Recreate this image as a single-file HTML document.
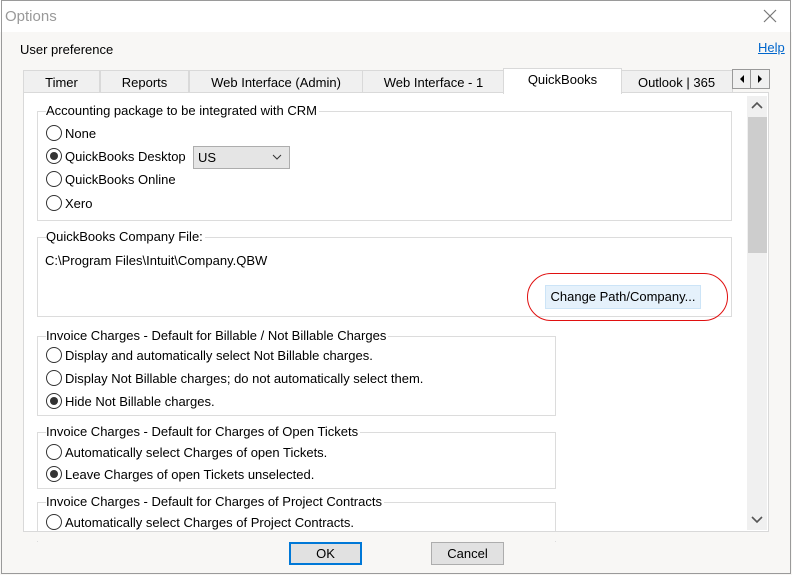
<!DOCTYPE html>
<html><head><style>
*{box-sizing:border-box;margin:0;padding:0}
body{width:792px;height:575px;position:relative;overflow:hidden;background:#fff;font-family:"Liberation Sans",sans-serif;font-size:13px;color:#000}
.a{position:absolute;white-space:nowrap}
.win{position:absolute;left:0;top:0;width:792px;height:575px;background:#f8f7f5}
.frame{position:absolute;left:1px;top:0;width:790px;height:574px;border:1px solid #9a9a9a}
.title{position:absolute;left:0;top:0;width:792px;height:32px;background:#fff}
.tab{position:absolute;top:70px;height:23px;background:#f0f0f0;border:1px solid #d9d9d9;border-bottom:none;text-align:center;line-height:23px;font-size:13px}
.panel{position:absolute;left:23px;top:92px;width:746px;height:442px;background:#fff;border:1px solid #d9d9d9}
.gb{position:absolute;border:1px solid #dcdcdc}
.gl{position:absolute;top:-9px;left:8px;background:#fff;padding-right:2px;font-size:13px}
.r{position:absolute;width:16px;height:16px;border:1px solid #333;border-radius:50%;background:#fff}
.r.on::after{content:"";position:absolute;left:3px;top:3px;width:8px;height:8px;border-radius:50%;background:#333}
.btn{position:absolute;height:23px;background:#e1e1e1;border:1px solid #adadad;text-align:center;line-height:21px;font-size:13px}
</style></head><body>
<div class="win">
<div class="title"></div>
<div class="a" style="left:5px;top:8px;font-size:15px;color:#999">Options</div>
<svg class="a" style="left:763px;top:9px" width="14" height="14"><path d="M1 1L13 13M13 1L1 13" stroke="#777" stroke-width="1.2"/></svg>
<div class="a" style="left:20px;top:42px">User preference</div>
<div class="a" style="left:758px;top:40px;color:#0066cc;text-decoration:underline">Help</div>

<div class="tab" style="left:23px;width:77px">Timer</div>
<div class="tab" style="left:100px;width:89px">Reports</div>
<div class="tab" style="left:189px;width:174px">Web Interface (Admin)</div>
<div class="tab" style="left:362px;width:143px">Web Interface - 1</div>
<div class="tab" style="left:620px;width:113px">Outlook | 365</div>
<div class="panel"></div>
<div class="tab" style="left:503px;top:68px;height:26px;width:119px;background:#fff;line-height:22px">QuickBooks</div>
<div class="a" style="left:732px;top:69px;width:38px;height:20px;border:1px solid #999;background:#f0f0f0"></div>
<div class="a" style="left:750px;top:70px;width:1px;height:18px;background:#999"></div>
<svg class="a" style="left:737px;top:74px" width="10" height="10"><path d="M7 1L3 5L7 9Z" fill="#000"/></svg>
<svg class="a" style="left:755px;top:74px" width="10" height="10"><path d="M3 1L7 5L3 9Z" fill="#000"/></svg>

<div class="a" style="left:747px;top:96px;width:20px;height:434px;background:#f0f0f0"></div>
<div class="a" style="left:748px;top:117px;width:19px;height:136px;background:#cdcdcd"></div>
<svg class="a" style="left:751px;top:101px" width="12" height="8"><path d="M1 7L6 2L11 7" stroke="#555" stroke-width="1.6" fill="none"/></svg>
<svg class="a" style="left:751px;top:516px" width="12" height="8"><path d="M1 1L6 6L11 1" stroke="#555" stroke-width="1.6" fill="none"/></svg>

<div class="gb" style="left:37px;top:111px;width:695px;height:110px"><span class="gl">Accounting package to be integrated with CRM</span></div>
<div class="r" style="left:46px;top:125px"></div><div class="a" style="left:65px;top:126px">None</div>
<div class="r on" style="left:46px;top:148px"></div><div class="a" style="left:65px;top:149px">QuickBooks Desktop</div>
<div class="a" style="left:193px;top:146px;width:97px;height:23px;background:#e5e5e5;border:1px solid #adadad;padding-left:4px;line-height:21px">US</div>
<svg class="a" style="left:272px;top:154px" width="10" height="7"><path d="M1 1L5 5L9 1" stroke="#333" fill="none"/></svg>
<div class="r" style="left:46px;top:171px"></div><div class="a" style="left:65px;top:172px">QuickBooks Online</div>
<div class="r" style="left:46px;top:195px"></div><div class="a" style="left:65px;top:196px">Xero</div>

<div class="gb" style="left:37px;top:237px;width:695px;height:80px"><span class="gl">QuickBooks Company File:</span></div>
<div class="a" style="left:45px;top:253px">C:\Program Files\Intuit\Company.QBW</div>
<div class="a" style="left:545px;top:285px;width:156px;height:24px;background:#e5f1fb;border:1px solid #cce4f7;line-height:22px;text-align:center">Change Path/Company...</div>
<div class="a" style="left:527px;top:273px;width:201px;height:48px;border:1.5px solid #e01010;border-radius:24px"></div>

<div class="gb" style="left:37px;top:336px;width:519px;height:80px"><span class="gl">Invoice Charges - Default for Billable / Not Billable Charges</span></div>
<div class="r" style="left:46px;top:347px"></div><div class="a" style="left:65px;top:348px">Display and automatically select Not Billable charges.</div>
<div class="r" style="left:46px;top:370px"></div><div class="a" style="left:65px;top:371px">Display Not Billable charges; do not automatically select them.</div>
<div class="r on" style="left:46px;top:393px"></div><div class="a" style="left:65px;top:394px">Hide Not Billable charges.</div>

<div class="gb" style="left:37px;top:432px;width:519px;height:57px"><span class="gl">Invoice Charges - Default for Charges of Open Tickets</span></div>
<div class="r" style="left:46px;top:444px"></div><div class="a" style="left:65px;top:445px">Automatically select Charges of open Tickets.</div>
<div class="r on" style="left:46px;top:466px"></div><div class="a" style="left:65px;top:467px">Leave Charges of open Tickets unselected.</div>

<div class="gb" style="left:37px;top:502px;width:519px;height:40px;border-bottom:none"><span class="gl">Invoice Charges - Default for Charges of Project Contracts</span></div>
<div class="r" style="left:46px;top:514px"></div><div class="a" style="left:65px;top:515px">Automatically select Charges of Project Contracts.</div>
<div class="a" style="left:23px;top:531px;width:746px;height:10px;background:#f8f7f5;border-top:1px solid #d9d9d9"></div>

<div class="btn" style="left:289px;top:542px;width:73px;border:2px solid #0078d7;line-height:19px">OK</div>
<div class="btn" style="left:431px;top:542px;width:73px">Cancel</div>
<div class="frame"></div>
</div>
</body></html>
